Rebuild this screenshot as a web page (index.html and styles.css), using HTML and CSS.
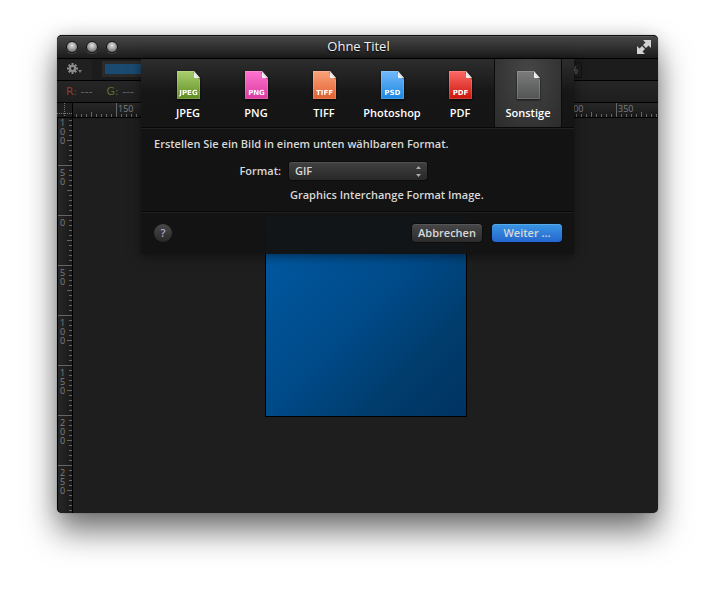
FILE: index.html
```html
<!DOCTYPE html>
<html lang="de">
<head>
<meta charset="utf-8">
<meta name="viewport" content="width=device-width, initial-scale=1">
<title>Ohne Titel</title>
<link rel="stylesheet" href="styles.css">
</head>
<body>
<svg class="defs" width="0" height="0" aria-hidden="true">
  <defs>
    <linearGradient id="green" x2="0" y2="1"><stop stop-color="#a9cf70"/><stop offset="1" stop-color="#5f8d1f"/></linearGradient>
    <linearGradient id="pink" x2="0" y2="1"><stop stop-color="#ff74d0"/><stop offset="1" stop-color="#da3ba0"/></linearGradient>
    <linearGradient id="orange" x2="0" y2="1"><stop stop-color="#fba37c"/><stop offset="1" stop-color="#e0602f"/></linearGradient>
    <linearGradient id="blue" x2="0" y2="1"><stop stop-color="#74b9fb"/><stop offset="1" stop-color="#1c86e0"/></linearGradient>
    <linearGradient id="red" x2="0" y2="1"><stop stop-color="#ff6a66"/><stop offset="1" stop-color="#c9160c"/></linearGradient>
    <linearGradient id="gray" x2="0" y2="1"><stop stop-color="#7c7c7c"/><stop offset="1" stop-color="#525553"/></linearGradient>
    <linearGradient id="fold" x1="0" y1="1" x2="1" y2="0"><stop stop-color="#fff"/><stop offset=".5" stop-color="#ddd"/><stop offset="1" stop-color="#888"/></linearGradient>
    <symbol id="page" viewBox="0 0 23 28">
      <path d="M0 0H17L23 7V28H0Z"/>
      <path d="M.5 27.500V.5H17M22.500 8V27.500H.5" fill="none" stroke="#fff" stroke-opacity=".16"/>
      <path d="M16 2L23 9V7L17 0Z" fill="#000" fill-opacity=".3"/>
      <path d="M17 0L23 7H18Q17 7 17 6Z" fill="url(#fold)"/>
    </symbol>
  </defs>
</svg>
<main class="window">
  <header class="titlebar">
    <div class="lights">
      <button class="light" aria-label="Schließen"></button>
      <button class="light" aria-label="Minimieren"></button>
      <button class="light" aria-label="Zoomen"></button>
    </div>
    <h1 class="title">Ohne Titel</h1>
    <button class="fullscreen" aria-label="Vollbild">
      <svg width="14" height="14" viewBox="0 0 14 14" fill="#d2d2d2"><path d="M6 0H14V8L11.500 5.500L9 8L6 5L8.500 2.500ZM0 6L2.500 8.500L5 6L8 9L5.500 11.500L8 14H0Z"/></svg>
    </button>
  </header>
  <div class="toolbar">
    <button class="gear" aria-label="Aktionen">
      <svg width="16" height="12" viewBox="0 0 16 12"><g stroke="#8c8c8c" stroke-width="2"><path d="M5.500 0V11M0 5.500H11M1.700 1.700L9.300 9.300M9.300 1.700L1.700 9.300"/></g><circle cx="5.500" cy="5.500" r="3.600" fill="#8c8c8c"/><circle cx="5.500" cy="5.500" r="1.400" fill="#1d1d1d"/><path d="M11 7H15L13 10Z" fill="#777"/></svg>
    </button>
    <div class="swatch"></div>
    <div class="scale">%</div>
  </div>
  <div class="info"><span><b class="r">R:</b> ---</span><span><b class="g">G:</b> ---</span></div>
  <div class="workspace">
    <div class="corner"></div>
    <div class="ruler ruler-x">
      <span></span><span>150</span><span></span><span></span><span></span><span></span><span></span><span></span><span></span><span></span><span>300</span><span>350</span>
    </div>
    <div class="ruler ruler-y">
      <span>100</span><span>50</span><span>0</span><span>50</span><span>100</span><span>150</span><span>200</span><span>250</span>
    </div>
    <div class="stage"><div class="artboard"></div></div>
  </div>

  <form class="sheet" role="dialog" aria-label="Exportieren">
    <div class="tabs" role="tablist">
      <button type="button" class="tab" role="tab"><svg class="file" width="23" height="28"><use href="#page" fill="url(#green)"/><text x="11.500" y="24">JPEG</text></svg>JPEG</button>
      <button type="button" class="tab" role="tab"><svg class="file" width="23" height="28"><use href="#page" fill="url(#pink)"/><text x="11.500" y="24">PNG</text></svg>PNG</button>
      <button type="button" class="tab" role="tab"><svg class="file" width="23" height="28"><use href="#page" fill="url(#orange)"/><text x="11.500" y="24">TIFF</text></svg>TIFF</button>
      <button type="button" class="tab" role="tab"><svg class="file" width="23" height="28"><use href="#page" fill="url(#blue)"/><text x="11.500" y="24">PSD</text></svg>Photoshop</button>
      <button type="button" class="tab" role="tab"><svg class="file" width="23" height="28"><use href="#page" fill="url(#red)"/><text x="11.500" y="24">PDF</text></svg>PDF</button>
      <button type="button" class="tab selected" role="tab" aria-selected="true"><svg class="file" width="23" height="28"><use href="#page" fill="url(#gray)"/></svg>Sonstige</button>
    </div>
    <div class="options">
      <p class="intro">Erstellen Sie ein Bild in einem unten wählbaren Format.</p>
      <div class="row">
        <label for="format">Format:</label>
        <div class="picker">
          <select id="format"><option>GIF</option></select>
          <svg class="arrows" width="5" height="11" viewBox="0 0 5 11" fill="#aaa" aria-hidden="true"><path d="M0 3H5L2.500 0ZM0 8H5L2.500 11Z"/></svg>
        </div>
        <p class="hint">Graphics Interchange Format Image.</p>
      </div>
    </div>
    <div class="actions">
      <button type="button" class="help" aria-label="Hilfe">?</button>
      <button type="button" class="button">Abbrechen</button>
      <button type="button" class="button primary">Weiter …</button>
    </div>
  </form>
</main>
</body>
</html>
```
FILE: styles.css
```css
* { box-sizing: border-box; }

body {
  margin: 0;
  min-height: 100vh;
  padding: 35px 57px 79px;
  display: flex;
  background: #fff;
  font: 600 11px/16px "Open Sans", "Noto Sans", sans-serif;
  color: #d8d8d8;
}

h1, p { margin: 0; }
button, select { font: inherit; color: inherit; border: 0; margin: 0; padding: 0; background: none; }
.defs { position: absolute; }

.window {
  position: relative;
  flex: 1;
  min-width: 0;
  display: flex;
  flex-direction: column;
  border-radius: 5px;
  background: #1e1e1e;
  box-shadow: 0 0 1px rgba(0, 0, 0, .6), 0 18px 32px rgba(0, 0, 0, .55), 0 0 18px rgba(0, 0, 0, .12);
}

.titlebar {
  height: 24px;
  padding: 0 7px 1px 9px;
  display: grid;
  grid-template-columns: 1fr auto 1fr;
  align-items: center;
  border-radius: 5px 5px 0 0;
  border-top: 1px solid #111;
  border-bottom: 1px solid #000;
  background: linear-gradient(#474747, #1b1b1b);
  box-shadow: inset 0 1px #555;
}
.lights { display: flex; gap: 8px; }
.light {
  width: 12px;
  height: 12px;
  border: 1px solid #161616;
  border-radius: 50%;
  background: radial-gradient(circle at 50% 35%, #e2e2e2, #a2a2a2 45%, #5e5e5e 90%);
  box-shadow: 0 1px #484848;
}
.title { font-size: 13px; font-weight: 400; line-height: 19px; color: #f2f2f2; text-shadow: 0 1px 2px #000; }
.fullscreen { justify-self: end; display: flex; }

.toolbar {
  height: 22px;
  display: flex;
  align-items: center;
  border-bottom: 1px solid #000;
  background: #1c1c1c;
}
.gear { width: 35px; height: 21px; padding: 0 0 2px 10px; display: flex; align-items: center; background: #202020; }
.swatch { width: 120px; height: 16px; margin: 0 auto 2px 10px; border: 3px solid #2a2a2a; background: #1b4a70; }
.scale {
  width: 44px;
  height: 16px;
  margin: 0 76px 0 0;
  padding-right: 3px;
  border: 1px solid #111;
  text-align: right;
  line-height: 14px;
  font-weight: 400;
  font-size: 10px;
  color: #8b7a68;
}

.info {
  height: 22px;
  padding-left: 9px;
  display: flex;
  align-items: center;
  gap: 14px;
  border-bottom: 1px solid #000;
  background: linear-gradient(#252525, #1e1e1e);
  font: 11px/16px "DejaVu Sans", sans-serif;
  color: #666;
}
.info b { font-weight: 400; }
.r { color: #8a3e2c; }
.g { color: #56702f; }

.workspace {
  flex: 1;
  min-height: 0;
  display: grid;
  grid-template: 15px minmax(0, 1fr) / 16px minmax(0, 1fr);
}
.corner {
  border-right: 1px solid #000;
  border-bottom: 1px solid #000;
  background:
    repeating-linear-gradient(90deg, #777 0 1px, transparent 1px 2px) 0 10px / 100% 1px no-repeat,
    repeating-linear-gradient(#777 0 1px, transparent 1px 2px) 7px 0 / 1px 100% no-repeat,
    #1e1e1e;
}
.ruler { display: flex; overflow: hidden; font-size: 9px; font-weight: 400; line-height: 9px; color: #808080; }
.ruler span { flex: none; }
.ruler-x { border-bottom: 1px solid #000; background: linear-gradient(#272727, #191919); }
.ruler-x span {
  width: 50px;
  padding: 1px 0 0 2px;
  background:
    linear-gradient(#666, #666) 0 0 / 1px 100% no-repeat,
    linear-gradient(#666, #666) 25px 100% / 1px 5px no-repeat,
    repeating-linear-gradient(90deg, #666 0 1px, transparent 1px 5px) 0 100% / 100% 3px no-repeat;
}
.ruler-x span:first-child { margin-left: -7px; }
.ruler-y {
  contain: size;
  flex-direction: column;
  border-left: 1px solid #000;
  border-right: 1px solid #000;
  border-radius: 0 0 0 5px;
  background: linear-gradient(90deg, #272727, #191919);
}
.ruler-y span {
  height: 50px;
  padding: 3px 6px 0 2px;
  word-break: break-all;
  background:
    linear-gradient(#666, #666) 0 0 / 100% 1px no-repeat,
    linear-gradient(#666, #666) 100% 25px / 5px 1px no-repeat,
    repeating-linear-gradient(#666 0 1px, transparent 1px 5px) 100% 0 / 3px 100% no-repeat;
}
.ruler-y span:first-child { margin-top: -3px; }

.stage { display: flex; align-items: center; justify-content: center; }
.artboard {
  width: 202px;
  height: 202px;
  border: 1px solid #000;
  background: linear-gradient(135deg, #005ba5, #004a88 50%, #003c6c 75%, #003363);
}

.sheet {
  position: absolute;
  top: 24px;
  left: 0;
  right: 0;
  width: 433px;
  margin: 0 auto;
  background: rgba(19, 19, 19, .96);
  box-shadow: 0 2px 10px rgba(0, 0, 0, .5);
}
.tabs {
  display: flex;
  padding: 0 12px 0 13px;
  background: linear-gradient(#2d2d2d, #161616 50%, #151515);
}
.tab {
  flex: 1 1 0;
  min-width: 0;
  height: 68px;
  padding-top: 12px;
  display: flex;
  flex-direction: column;
  align-items: center;
  gap: 6px;
  color: #fff;
}
.selected {
  background: radial-gradient(ellipse at 50% 20%, #464646, #2b2b2b);
  box-shadow: inset 1px 0 #0c0c0c, inset -1px 0 #0c0c0c;
}
.file { flex: none; filter: drop-shadow(0 1px 1px rgba(0, 0, 0, .7)); }
.file text { font: 700 7px "DejaVu Sans", sans-serif; fill: #fff; text-anchor: middle; }

.options { padding: 8px 12px 8px 13px; border-top: 1px solid #080808; box-shadow: inset 0 1px #222; }
.row {
  margin-top: 10px;
  display: grid;
  grid-template-columns: 127px 1fr;
  column-gap: 8px;
  row-gap: 7px;
  align-items: center;
}
.row label { text-align: right; }
.hint { grid-column: 2; padding-left: 1px; }
.picker { display: grid; width: 138px; align-items: center; }
.picker > * { grid-area: 1 / 1; }
.picker select {
  appearance: none;
  height: 18px;
  padding: 0 20px 0 6px;
  border-radius: 3px;
  background: linear-gradient(#414141, #282828);
  box-shadow: 0 0 0 1px #0c0c0c, inset 0 1px #515151;
}
.arrows { justify-self: end; margin-right: 6px; pointer-events: none; }

.actions {
  padding: 12px 12px 12px 13px;
  display: flex;
  align-items: center;
  gap: 10px;
  border-top: 1px solid #080808;
  box-shadow: inset 0 1px #202020;
}
.help { width: 18px; height: 18px; margin-right: auto; border-radius: 50%; background: linear-gradient(#484848, #292929); color: #b9a3d0; }
.button {
  min-width: 70px;
  height: 18px;
  padding: 0 6px;
  border-radius: 4px;
  background: linear-gradient(#484848, #2b2b2b);
  box-shadow: 0 0 0 1px #0c0c0c, inset 0 1px #555;
}
.primary { background: linear-gradient(#3a96e4, #2567cf); box-shadow: 0 0 0 1px #0a1320, inset 0 1px #58a7e6; }
```
